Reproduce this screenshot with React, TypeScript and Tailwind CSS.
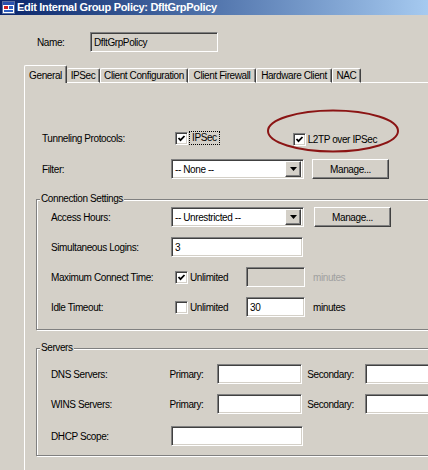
const sunken =
  "border border-t-[#808080] border-l-[#808080] border-b-white border-r-white shadow-[inset_1px_1px_0_#404040,inset_-1px_-1px_0_#d4d0c8]";
const raised =
  "border border-t-white border-l-white border-b-[#404040] border-r-[#404040] shadow-[inset_-1px_-1px_0_#808080]";

function TextBox({ className, value, disabled }: { className: string; value?: string; disabled?: boolean }) {
  return (
    <div
      className={`${sunken} flex h-[20px] shrink-0 items-center pl-[3px] ${disabled ? "bg-[#d4d0c8]" : "bg-white"} ${className}`}
    >
      {value}
    </div>
  );
}

function Select({ value }: { value: string }) {
  return (
    <div className={`${sunken} flex h-[20px] w-[133px] shrink-0 items-center justify-between bg-white pl-[3px] pr-[2px]`}>
      <span>{value}</span>
      <div className={`${raised} flex h-[16px] w-[16px] items-center justify-center bg-[#d4d0c8]`}>
        <svg width="7" height="4" viewBox="0 0 7 4">
          <path d="M0 0h7L3.5 4z" fill="#000" />
        </svg>
      </div>
    </div>
  );
}

function Button({ label, className }: { label: string; className?: string }) {
  return (
    <div className={`${raised} flex h-[20px] w-[77px] shrink-0 items-center justify-center bg-[#d4d0c8] ${className ?? ""}`}>
      {label}
    </div>
  );
}

function Check({ checked }: { checked?: boolean }) {
  return (
    <div className={`${sunken} flex h-[13px] w-[13px] shrink-0 items-center justify-center bg-white`}>
      {checked && (
        <svg width="9" height="9" viewBox="0 0 9 9">
          <path d="M1.5 4l2 2.2 4-4.2" stroke="#000" strokeWidth="1.8" fill="none" />
        </svg>
      )}
    </div>
  );
}

function GroupBox({ title, className, children }: { title: string; className: string; children: React.ReactNode }) {
  return (
    <div
      className={`relative w-[420px] border border-[#808080] pl-[14px] shadow-[1px_1px_0_#fff,inset_1px_1px_0_#fff] ${className}`}
    >
      <span className="absolute -top-[8px] left-[3px] bg-[#d4d0c8] px-px leading-[14px]">{title}</span>
      {children}
    </div>
  );
}

const tabs = [
  { label: "IPSec", w: "w-[33px]", first: true },
  { label: "Client Configuration", w: "w-[88px]" },
  { label: "Client Firewall", w: "w-[68px]" },
  { label: "Hardware Client", w: "w-[76px]" },
  { label: "NAC", w: "w-[29px]" },
];

export default function App() {
  return (
    <div className="relative h-[470px] w-[428px] overflow-hidden whitespace-nowrap bg-[#d4d0c8] font-['Liberation_Sans',Arial,sans-serif] text-[10px] tracking-[-0.4px] text-black">
      {/* title bar */}
      <div className="flex h-[15px] items-center gap-[2px] bg-gradient-to-r from-[#0a246a] to-[#a6caf0] pl-[2px]">
        <svg width="13" height="13" viewBox="0 0 13 13">
          <rect x="0.5" y="0.5" width="12" height="12" fill="#fff" stroke="#5a6ea0" />
          <rect x="1" y="1" width="11" height="3" fill="#2850b0" />
          <rect x="2" y="5" width="4" height="3" fill="#d02020" />
          <rect x="7" y="5" width="4" height="3" fill="#3060c0" />
          <rect x="2" y="9" width="9" height="2" fill="#3060c0" />
        </svg>
        <span className="text-[11px] leading-[15px] font-bold tracking-[-0.3px] text-white">
          Edit Internal Group Policy: DfltGrpPolicy
        </span>
      </div>

      {/* name */}
      <div className="mt-[17px] flex items-center pl-[37px]">
        <span className="w-[53px]">Name:</span>
        <TextBox className="h-[18px] w-[128px]" value="DfltGrpPolicy" disabled />
      </div>

      {/* tabs */}
      <div className="mt-[13px] ml-[24px] flex h-[18px] items-end">
        <div className="flex h-[18px] w-[43px] items-start justify-center rounded-t-[2px] border-t border-l border-r border-t-white border-l-white border-r-[#404040] pt-[2px] shadow-[inset_-1px_0_0_#808080]">
          General
        </div>
        {tabs.map((t) => (
          <div
            key={t.label}
            className={`flex h-[15px] ${t.w} items-center justify-center rounded-t-[2px] border-t border-r border-b border-t-white border-r-[#404040] border-b-white shadow-[inset_-1px_0_0_#808080] ${t.first ? "" : "border-l border-l-white"}`}
          >
            {t.label}
          </div>
        ))}
        <div className="h-px flex-1 bg-white" />
      </div>

      {/* panel */}
      <div className="ml-[24px] h-[400px] w-[420px] border-l border-white pt-[45px] pl-[11px]">
        <div className="flex h-[20px] items-center pl-[6px]">
          <span className="w-[129px]">Tunneling Protocols:</span>
          <div className="ml-[4px]">
            <Check checked />
          </div>
          <span className="ml-px border border-dotted border-black px-[2px] leading-[12px]">IPSec</span>
          <div className="mt-[2px] ml-[73px]">
            <Check checked />
          </div>
          <span className="mt-[2px] ml-[2px]">L2TP over IPSec</span>
        </div>

        <div className="mt-[11px] flex h-[20px] items-center pl-[6px]">
          <span className="w-[129px]">Filter:</span>
          <Select value="-- None --" />
          <Button label="Manage..." className="ml-[8px]" />
        </div>

        <GroupBox title="Connection Settings" className="mt-[20px] pt-[7px] pb-[12px]">
          <div className="flex flex-col gap-[10px]">
            <div className="flex h-[20px] items-center">
              <span className="w-[120px]">Access Hours:</span>
              <Select value="-- Unrestricted --" />
              <Button label="Manage..." className="ml-[10px]" />
            </div>
            <div className="flex h-[20px] items-center">
              <span className="w-[120px]">Simultaneous Logins:</span>
              <TextBox className="w-[132px]" value="3" />
            </div>
            <div className="flex h-[20px] items-center">
              <span className="w-[120px]">Maximum Connect Time:</span>
              <div className="flex w-[75px] items-center pl-[4px]">
                <Check checked />
                <span className="ml-[2px]">Unlimited</span>
              </div>
              <TextBox className="w-[59px]" disabled />
              <span className="ml-[8px] text-[#a0a0a0]">minutes</span>
            </div>
            <div className="flex h-[20px] items-center">
              <span className="w-[120px]">Idle Timeout:</span>
              <div className="flex w-[75px] items-center pl-[4px]">
                <Check />
                <span className="ml-[2px]">Unlimited</span>
              </div>
              <TextBox className="w-[59px]" value="30" />
              <span className="ml-[8px]">minutes</span>
            </div>
          </div>
        </GroupBox>

        <GroupBox title="Servers" className="mt-[18px] pt-[15px] pb-[9px]">
          <div className="flex flex-col">
            <div className="flex h-[20px] items-center">
              <span className="w-[119px]">DNS Servers:</span>
              <span className="w-[48px]">Primary:</span>
              <TextBox className="w-[85px]" />
              <span className="ml-[5px] w-[58px]">Secondary:</span>
              <TextBox className="w-[90px]" />
            </div>
            <div className="mt-[10px] flex h-[20px] items-center">
              <span className="w-[119px]">WINS Servers:</span>
              <span className="w-[48px]">Primary:</span>
              <TextBox className="w-[85px]" />
              <span className="ml-[5px] w-[58px]">Secondary:</span>
              <TextBox className="w-[90px]" />
            </div>
            <div className="mt-[12px] flex h-[20px] items-center">
              <span className="w-[120px]">DHCP Scope:</span>
              <TextBox className="w-[132px]" />
            </div>
          </div>
        </GroupBox>
      </div>

      {/* annotation ellipse */}
      <svg className="absolute top-[109px] left-[266px]" width="134" height="44" viewBox="0 0 134 44">
        <ellipse cx="67" cy="22" rx="65" ry="20.5" fill="none" stroke="#8b1414" strokeWidth="2" />
      </svg>
    </div>
  );
}
